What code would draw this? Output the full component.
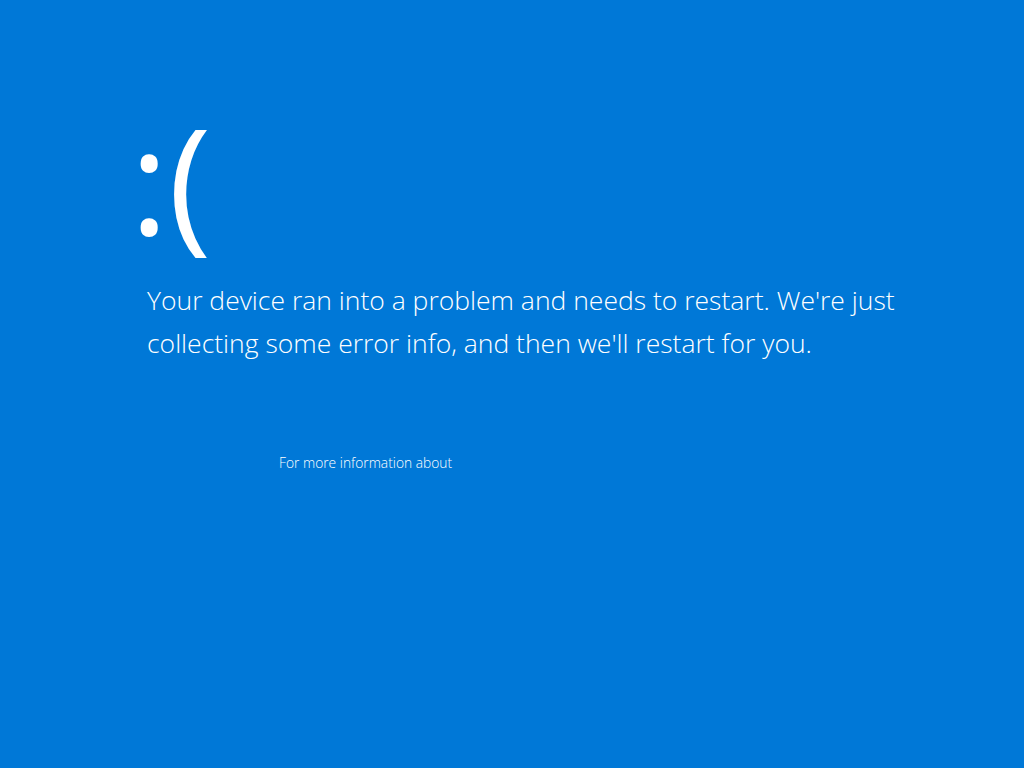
export default function App() {
  return (
    <div
      className="w-[1024px] h-[768px] bg-[#0078d7] text-white overflow-hidden"
      style={{ fontFamily: '"Open Sans", "Noto Sans", sans-serif' }}
    >
      <div className="pl-[147px] pt-[106px]">
        {/* sad face */}
        <div className="text-[146px] leading-[146px] font-normal -ml-[17px]">:(</div>

        {/* message */}
        <p className="mt-[27px] text-[26.5px] leading-[43px] font-light max-w-[800px]">
          Your device ran into a problem and needs to restart. We're just
          collecting some error info, and then we'll restart for you.
        </p>

        <div className="mt-[88px] pl-[132px] text-[13.8px] font-light">
          For more information about
        </div>
      </div>
    </div>
  )
}
